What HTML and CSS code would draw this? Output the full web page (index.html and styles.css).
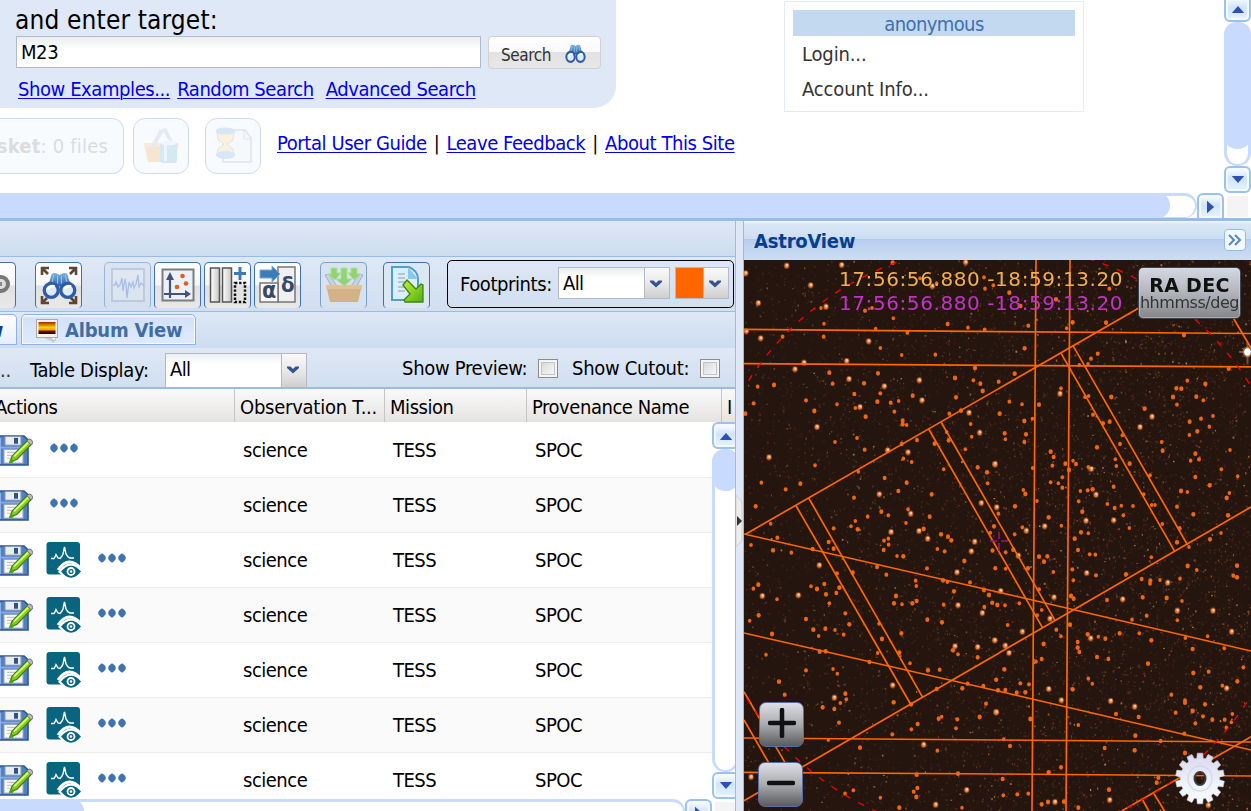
FILE: index.html
```html
<!DOCTYPE html>
<html lang="en">
<head>
<meta charset="utf-8">
<title>Portal</title>
<link rel="stylesheet" href="styles.css">
</head>
<body>
<svg class="defs" aria-hidden="true">
  <defs>
    <linearGradient id="gBlue" x1="0" y1="0" x2="0" y2="1"><stop offset="0" stop-color="#78b4e2"/><stop offset="1" stop-color="#244f9b"/></linearGradient>
    <linearGradient id="gGear" x1="0" y1="0" x2="0" y2="1"><stop offset="0" stop-color="#d9d6ee"/><stop offset="0.6" stop-color="#eef3fa"/><stop offset="1" stop-color="#f8fafc"/></linearGradient>
    <linearGradient id="gSun" x1="0" y1="0" x2="0" y2="1"><stop offset="0" stop-color="#a82400"/><stop offset="0.45" stop-color="#ffd000"/><stop offset="0.66" stop-color="#ff9a00"/><stop offset="0.76" stop-color="#5a1200"/><stop offset="1" stop-color="#210900"/></linearGradient>
    <linearGradient id="gGreen" x1="0" y1="0" x2="1" y2="1"><stop offset="0" stop-color="#c4f23c"/><stop offset="1" stop-color="#4fae12"/></linearGradient>
    <linearGradient id="gGrey" x1="0" y1="0" x2="1" y2="0"><stop offset="0" stop-color="#fff"/><stop offset="1" stop-color="#c5c5c5"/></linearGradient>
    <symbol id="binoc" viewBox="0 0 36 28" preserveAspectRatio="none">
      <path d="M10 2Q13 0 16 2L18 3 20 2Q23 0 26 2L28 9 35 18 27 15H9L1 18 8 9Z" fill="url(#gBlue)"/>
      <path d="M12 3l-2 9M16 4v8M20 4v8M24 3l2 9" stroke="#8fc3ea" stroke-width="1.200"/>
      <circle cx="9.500" cy="19" r="7.200" fill="#dcebf8" stroke="#2f5ca6" stroke-width="3.400"/>
      <circle cx="26.500" cy="19" r="7.200" fill="#dcebf8" stroke="#2f5ca6" stroke-width="3.400"/>
      <path d="M6 18q3-5 7-3M23 18q3-5 7-3" stroke="#fff" stroke-width="2.500" fill="none"/>
    </symbol>
    <symbol id="save" viewBox="0 0 34 32" preserveAspectRatio="none">
      <path d="M0 1H25L29 5V31H0Z" fill="#5280c8" stroke="#30578f" stroke-width="1.600"/>
      <path d="M1 3V30" stroke="#8eb2e8" stroke-width="2"/>
      <rect x="6" y="1.500" width="16" height="9" fill="#e8edf2" stroke="#8795a8"/>
      <rect x="15" y="3" width="4" height="6" fill="#2f527f"/>
      <path d="M2 13h26" stroke="#87ace4" stroke-width="2"/>
      <rect x="5" y="15" width="19" height="14" fill="#fafafa" stroke="#9aa7b6"/>
      <path d="M8 18h13M8 21h11M8 24h8" stroke="#bfc5cc" stroke-width="1.200"/>
      <path d="M11 28l2-6L29 5l4 4-15 16z" fill="#86ca20" stroke="#417a0d" stroke-width="1.200"/>
      <path d="M15 22L30 7" stroke="#d5f871" stroke-width="2"/>
      <path d="M28 6l2-2q3 0 4 4l-2 2z" fill="#c0b9b5" stroke="#736f70"/>
      <circle cx="12.500" cy="27" r="2" fill="#44a80d"/>
    </symbol>
    <symbol id="curve" viewBox="0 0 36 38">
      <rect x="0.500" y="0" width="33.500" height="32.500" rx="3" fill="#08657f"/>
      <path d="M12 30Q24 13 37 30Q25 42 12 30" fill="#fff"/>
      <path d="M5 16.500H8L9 15 10 12.500 12 16 14 16.500 16 14 17 12 18.500 5 20 12 22 15 24 16H28" fill="none" stroke="#fff" stroke-width="1.400"/>
      <path d="M12 28Q23 12 36 28" fill="none" stroke="#fff" stroke-width="3"/>
      <path d="M15 29.500Q25 18 35 29.500Q25 42 15 29.500Z" fill="#08657f"/>
      <circle cx="25" cy="29.500" r="4.400" fill="#fff"/><circle cx="25" cy="29.500" r="2.600" fill="#08657f"/><circle cx="25" cy="29.500" r="1.300" fill="#fff"/>
    </symbol>
    <symbol id="dots" viewBox="0 0 28 10">
      <path id="dot" d="M4 .3Q7.800 2.600 7.800 5 7.800 7.400 4 9.700 .2 7.400 .2 5 .2 2.600 4 .3Z" fill="#3e73ad"/>
      <use href="#dot" x="10"/><use href="#dot" x="20"/>
    </symbol>
    <symbol id="chev" viewBox="0 0 14 9"><path d="M1 1.500H4.500L7 4 9.500 1.500H13V3L7 8.500 1 3Z" fill="#35548f"/></symbol>
  </defs>
</svg>

<main class="page">
  <section class="top">
    <div class="top-view">
      <div class="top-left">
        <div class="search-panel">
          <h1 class="search-title">and enter target:</h1>
          <div class="search-line">
            <div class="target-input">M23</div>
            <div class="search-button"><span>Search</span><svg width="21" height="19"><use href="#binoc"/></svg></div>
          </div>
          <div class="search-links"><a href="#" class="l-ex">Show Examples...</a><a href="#" class="l-rnd">Random Search</a><a href="#" class="l-adv">Advanced Search</a></div>
        </div>
        <div class="basket-line">
          <div class="basket-box"><b>sket</b>: 0 files</div>
          <div class="pale-box">
            <svg width="40" height="40" viewBox="0 0 40 40">
              <path d="M3 17H38L34 36H7Z" fill="#ef9c36"/><path d="M3 17h35v4H3z" fill="#ffb65c"/>
              <path d="M9 21L19 3l4 2L13 22zM31 20L21 3l4-1 9 17z" fill="#9fb2cf"/>
              <rect x="19" y="16" width="17" height="21" rx="3" fill="#67a7d8"/><rect x="23" y="18" width="3" height="17" fill="#c5e2f5"/><ellipse cx="27.500" cy="17" rx="8" ry="2.500" fill="#d8eaf8"/>
            </svg>
          </div>
          <div class="pale-box hourglass">
            <svg width="40" height="40" viewBox="0 0 40 40">
              <path d="M10 4H32L38 12V36H10Z" fill="#f2f4f6" stroke="#8e99a8" stroke-width="1.500"/><path d="M31 4v9h7" fill="none" stroke="#8e99a8"/>
              <path d="M4 6H21L20 14 14 18 20 23 21 29H4L5 23 11 18 5 14Z" fill="#ffd26d" stroke="#7c91b5"/>
              <ellipse cx="12.500" cy="5" rx="10" ry="3.500" fill="#6ba3d8"/><ellipse cx="12.500" cy="29" rx="10" ry="4" fill="#6ba3d8"/>
            </svg>
          </div>
          <nav class="site-links"><a href="#">Portal User Guide</a><span>|</span><a href="#">Leave Feedback</a><span>|</span><a href="#">About This Site</a></nav>
        </div>
      </div>
      <aside class="account">
        <div class="account-name">anonymous</div>
        <div class="account-item login">Login...</div>
        <div class="account-item info">Account Info...</div>
      </aside>
    </div>
    <div class="vbar top-vbar">
      <div class="sbtn"><svg viewBox="0 0 14 9"><path d="M7 1L14 9H0Z"/></svg></div>
      <div class="vtrack"><div class="vthumb"></div></div>
      <div class="sbtn"><svg viewBox="0 0 14 9"><path d="M7 8L14 0H0Z"/></svg></div>
    </div>
    <div class="hbar top-hbar">
      <div class="htrack"><div class="hthumb"></div></div>
      <div class="sbtn side"><svg viewBox="0 0 9 14"><path d="M8 7L0 14V0Z"/></svg></div>
    </div>
    <div class="corner"></div>
  </section>

  <section class="bottom">
    <div class="results">
      <div class="results-head"></div>
      <div class="toolbar">
        <div class="tool t-first"><svg width="44" height="44" viewBox="0 0 44 44"><circle cx="30" cy="21" r="7" fill="#ddd" stroke="#777" stroke-width="4"/><path d="M15 21h16" stroke="#888" stroke-width="4"/></svg></div>
        <div class="tool t-zoom"><svg width="44" height="44" viewBox="0 0 44 44">
          <g fill="none" stroke="#5c4636" stroke-width="2.600"><path d="M5 12V5h7M5 5l6 6M32 5h7v7M39 5l-6 6M5 33v7h7M5 40l5-5M32 40h7v-7M39 40l-6-6"/></g>
          <use href="#binoc" x="5" y="9" width="35" height="27"/></svg></div>
        <div class="tool t-spec dim"><svg width="44" height="44" viewBox="0 0 44 44"><rect x="6" y="6" width="32" height="32" fill="#e4eaf1" stroke="#9aa7b7" stroke-width="2"/><path d="M7 22h2l1-3 2 5 2-2 2-7 1 13 2-12 1 5 1 14 2-16 2 5 2-5 1 6 2-4 2-9 1 12 2-4 3 3" fill="none" stroke="#6687d0" stroke-width="1.300"/></svg></div>
        <div class="tool"><svg width="44" height="44" viewBox="0 0 44 44"><rect x="6.500" y="6.500" width="31" height="31" fill="#eaf1fa" stroke="#7d7d7d" stroke-width="2"/><path d="M14 35V13M8 31H32" stroke="#4a5074" stroke-width="2.200"/><path d="M14 9l4 8h-8zM35 31l-6 4v-8z" fill="#4a5074"/><circle cx="26.500" cy="13" r="2.300" fill="#e95b17"/><circle cx="30" cy="20.500" r="2.300" fill="#e95b17"/><circle cx="21" cy="24" r="2.300" fill="#e95b17"/></svg></div>
        <div class="tool"><svg width="44" height="44" viewBox="0 0 44 44"><rect x="4.500" y="5" width="9" height="34" fill="url(#gGrey)" stroke="#555" stroke-width="1.500"/><rect x="16.500" y="5" width="9" height="34" fill="url(#gGrey)" stroke="#555" stroke-width="1.500"/><rect x="29" y="20" width="10" height="19" fill="none" stroke="#111" stroke-width="2.500" stroke-dasharray="2.400 1.700"/><path d="M34 4v13M28 10.500h12" stroke="#3b7cb8" stroke-width="3"/></svg></div>
        <div class="tool"><svg width="44" height="44" viewBox="0 0 44 44"><rect x="22" y="4" width="17" height="35" fill="#eef0f2" stroke="#777" stroke-width="1.500"/><rect x="4" y="20" width="18" height="19" fill="#fafafa" stroke="#777" stroke-width="1.500"/><path d="M4 7h12V3l8 8-8 8v-4H4z" fill="#3c7cb8" stroke="#76aadb"/><text x="6" y="35" class="greek">α</text><text x="25" y="29" class="greek delta">δ</text></svg></div>
        <div class="tool t-bask dim"><svg width="44" height="44" viewBox="0 0 44 44"><path d="M3 12l4-1 10 15-5 2zM41 12l-4-1-10 15 5 2z" fill="#b8c5d5" stroke="#8595aa"/><path d="M4 22H40L36 39H8Z" fill="#d39343"/><path d="M4 22h36v4H4z" fill="#e9ac5d"/><path d="M9 5h6v5h4l-6 7-7-6h3zM19 5h6v11h5l-8 7-8-7h5zM29 5h6v6h4l-7 6-6-7h3z" fill="#62c81e" stroke="#8bdc5e"/></svg></div>
        <div class="tool t-export"><svg width="44" height="44" viewBox="0 0 44 44"><path d="M7 4H24Q33 8 33 16V37H7Z" fill="#dceefb" stroke="#4d9fd0" stroke-width="2"/><path d="M23 4v12h10z" fill="#8dc7e8"/><path d="M13 11h7M13 15h7M13 19h12M13 24h8M13 28h7" stroke="#a1b9ce" stroke-width="1.500"/><path d="M18 22l4-5 9 9 5-5 2 1V39H20l-1-2 6-6z" fill="url(#gGreen)" stroke="#3d850d" stroke-width="1.300"/></svg></div>
        <div class="footprints">
          <span class="fp-label">Footprints:</span>
          <div class="combo fp-combo"><span>All</span><i><svg><use href="#chev"/></svg></i></div>
          <div class="combo fp-color"><span></span><i><svg><use href="#chev"/></svg></i></div>
        </div>
      </div>
      <div class="tabs">
        <div class="tab active">w</div>
        <div class="tab album"><svg width="24" height="25" viewBox="0 0 24 25"><path d="M3 16L18 24 22 5 20 3Z" fill="#c9cfda"/><path d="M5 14l14 8 2-8z" fill="#f3f5f7" stroke="#aab2c0" stroke-width=".7"/><rect x=".5" y=".5" width="21" height="18" fill="#f7f3e9" stroke="#aaa"/><rect x="2.500" y="3" width="17" height="12" fill="url(#gSun)"/></svg><span>Album View</span></div>
      </div>
      <div class="options">
        <span class="dots-label">..</span><span class="td-label">Table Display:</span>
        <div class="combo td-combo"><span>All</span><i><svg><use href="#chev"/></svg></i></div>
        <span class="prev-label">Show Preview:</span><b class="check"></b>
        <span class="cut-label">Show Cutout:</span><b class="check second"></b>
      </div>
      <div class="grid-head"><span class="c1">Actions</span><span class="c2">Observation T...</span><span class="c3">Mission</span><span class="c4">Provenance Name</span><span class="c5">I</span></div>
      <div class="grid-body">
        <div class="rows">
          <div class="row"><div class="acts"><svg class="i-save"><use href="#save"/></svg><svg class="i-dots"><use href="#dots"/></svg></div><span class="c2">science</span><span class="c3">TESS</span><span class="c4">SPOC</span></div>
          <div class="row"><div class="acts"><svg class="i-save"><use href="#save"/></svg><svg class="i-dots"><use href="#dots"/></svg></div><span class="c2">science</span><span class="c3">TESS</span><span class="c4">SPOC</span></div>
          <div class="row"><div class="acts"><svg class="i-save"><use href="#save"/></svg><svg class="i-curve"><use href="#curve"/></svg><svg class="i-dots"><use href="#dots"/></svg></div><span class="c2">science</span><span class="c3">TESS</span><span class="c4">SPOC</span></div>
          <div class="row"><div class="acts"><svg class="i-save"><use href="#save"/></svg><svg class="i-curve"><use href="#curve"/></svg><svg class="i-dots"><use href="#dots"/></svg></div><span class="c2">science</span><span class="c3">TESS</span><span class="c4">SPOC</span></div>
          <div class="row"><div class="acts"><svg class="i-save"><use href="#save"/></svg><svg class="i-curve"><use href="#curve"/></svg><svg class="i-dots"><use href="#dots"/></svg></div><span class="c2">science</span><span class="c3">TESS</span><span class="c4">SPOC</span></div>
          <div class="row"><div class="acts"><svg class="i-save"><use href="#save"/></svg><svg class="i-curve"><use href="#curve"/></svg><svg class="i-dots"><use href="#dots"/></svg></div><span class="c2">science</span><span class="c3">TESS</span><span class="c4">SPOC</span></div>
          <div class="row"><div class="acts"><svg class="i-save"><use href="#save"/></svg><svg class="i-curve"><use href="#curve"/></svg><svg class="i-dots"><use href="#dots"/></svg></div><span class="c2">science</span><span class="c3">TESS</span><span class="c4">SPOC</span></div>
        </div>
        <div class="vbar grid-vbar">
          <div class="sbtn"><svg viewBox="0 0 14 9"><path d="M7 1L14 9H0Z"/></svg></div>
          <div class="vtrack"><div class="vthumb"></div></div>
          <div class="sbtn"><svg viewBox="0 0 14 9"><path d="M7 8L14 0H0Z"/></svg></div>
        </div>
      </div>
      <div class="hbar grid-hbar">
        <div class="htrack"><div class="hthumb"></div></div>
        <div class="sbtn side"><svg viewBox="0 0 9 14"><path d="M8 7L0 14V0Z"/></svg></div>
        <div class="grid-corner"></div>
      </div>
    </div>
    <div class="splitter"><svg width="8" height="54" viewBox="0 0 8 54"><path d="M0 1L6 8V46L0 53Z" fill="#ededed" stroke="#cfcfcf"/><path d="M1 22l5 5-5 5z" fill="#333"/></svg></div>
    <div class="astro">
      <div class="astro-head"><span>AstroView</span><div class="collapse"><svg width="14" height="12" viewBox="0 0 14 12"><path d="M1 1l5 5-5 5M7 1l5 5-5 5" fill="none" stroke="#5a86bd" stroke-width="2"/></svg></div></div>
      <div class="sky">
        <canvas id="stars" width="507" height="551"></canvas>
        <svg class="overlay" viewBox="744 260 507 551" width="507" height="551">
          <g fill="none" stroke="#f60" stroke-width="1.700">
            <path d="M744 329.300L1000 331.700 1251 333.500M744 363.700L1000 365.300 1251 366.800M744 738L1000 740 1251 742M744 772.300L1000 774 1251 776"/>
            <path d="M1036 260Q1034.500 540 1032 811M1070 260Q1068.500 540 1066 811"/>
            <path d="M745 534.500L1205 270 1251 348M744 534L1000 592.500 1251 651M744 633L1000 691.500 1251 750"/>
            <path d="M744 800.700L910 704.500 1043 627.500 1251 507"/>
            <path d="M796 505.700L910.700 704.300M808.700 498L922.700 697.300M928.700 429L1042.300 627.300M941 422L1055 620.300M1060.700 352.700L1174.700 551.300M1073 345.700L1187 544"/>
            <path d="M744 691.700L791 773M744 720L779 780.600M1121.700 811L1251 736.700M1142.700 800l6 11M1154 793.700l11 18"/>
          </g>
          <circle cx="998" cy="541" r="296.500" fill="none" stroke="#f00" stroke-width="1.300" stroke-dasharray="6.500 9"/>
          <path d="M990 541h7M1001 541h7M999 532v7M999 543v8" stroke="#a0107c" stroke-width="1.600"/>
          <g id="gear" transform="translate(1200 778.500)"></g>
        </svg>
        <div class="coords">17:56:56.880 -18:59:13.20</div>
        <div class="coords cursor">17:56:56.880 -18:59:13.20</div>
        <div class="radec"><b>RA DEC</b><span>hhmmss/deg</span></div>
        <div class="zoom in"><svg width="28" height="30" viewBox="0 0 28 30"><path d="M14 2V28M2 15H26" stroke="#111" stroke-width="4.500" stroke-linecap="round"/></svg></div>
        <div class="zoom out"><svg width="28" height="30" viewBox="0 0 28 30"><path d="M2 15H26" stroke="#111" stroke-width="4.500" stroke-linecap="round"/></svg></div>
      </div>
    </div>
  </section>
</main>
<script src="sky.js"></script>
</body>
</html>
```

FILE: styles.css
```css
* { box-sizing: border-box; }
body { margin: 0; background: #fff; color: #000; font: 20px/24px "DejaVu Sans Condensed", "DejaVu Sans", sans-serif; font-stretch: condensed; letter-spacing: -0.42px; }
a { color: #0000ee; text-decoration: underline; text-decoration-thickness: 1px; text-underline-offset: 2px; }
svg { display: block; flex: none; }
.defs { position: absolute; width: 0; height: 0; }
.page { width: 1251px; height: 811px; overflow: hidden; display: flex; flex-direction: column; white-space: nowrap; }

/* search area */
.top { height: 221px; display: grid; grid-template-columns: 1224px 27px; grid-template-rows: 193px 25px; border-bottom: 3px solid #99bbe8; }
.top-view { display: flex; overflow: hidden; }
.top-left { width: 784px; }
.search-panel { width: 616px; height: 108px; background: #dfe8f6; border-radius: 0 0 22px 0; padding: 5px 0 0 15px; }
.search-title { margin: 0; font-size: 26px; line-height: 31px; height: 31px; font-weight: 400; letter-spacing: 0.15px; }
.search-line { display: flex; gap: 7px; height: 33px; padding-left: 1px; }
.target-input { width: 465px; height: 32px; border: 1px solid #b5b8c8; background: linear-gradient(#e9eeee, #fff 12px); padding: 3px 4px; }
.search-button { width: 113px; height: 33px; border: 1px solid #d1d1d1; border-radius: 4px; background: linear-gradient(#fff, #f9f9f9 48%, #e2e2e2 50%, #e7e7e7); display: flex; align-items: center; padding: 5px 0 0 12px; font-size: 17px; color: #333; letter-spacing: -0.4px; }
.search-button span { width: 64px; }
.search-button svg { margin-bottom: 4px; }
.search-links { display: flex; padding: 8px 0 0 3px; }
.l-ex { margin-right: 7px; }
.l-rnd { margin-right: 12px; }
.basket-line { display: flex; padding-top: 10px; }
.basket-box { width: 124px; height: 56px; border: 1px solid #d0dcec; border-left: 0; border-radius: 0 12px 12px 0; background: #f8fbfe; color: #dcdcde; padding: 15px 15px 0 0; direction: ltr; display: flex; justify-content: flex-end; white-space: pre; letter-spacing: 0.2px; margin-right: 9px; overflow: hidden; }
.pale-box { width: 56px; height: 56px; border: 1px solid #d0dcec; border-radius: 12px; background: #f8fbfe; padding: 7px; margin-right: 16px; }
.pale-box svg { opacity: .22; }
.site-links { display: flex; gap: 7px; padding-top: 13px; }
.account { width: 300px; height: 111px; margin-top: 1px; border: 1px solid #e4ebf5; padding: 8px; }
.account-name { height: 26px; line-height: 28px; background: #c3d9f0; color: #4170ad; text-align: center; letter-spacing: -0.6px; }
.account-item { color: #333; padding-left: 9px; height: 35px; line-height: 37px; letter-spacing: -0.15px; }

/* scrollbars */
.vbar, .hbar { display: flex; background: #fff; }
.vbar { flex-direction: column; }
.vtrack { flex: 1; border: 3px solid #c9daff; border-width: 0 3px 2px; border-radius: 13px; }
.vthumb { background: #c9daff; border-radius: 13px; margin: 0 -3px; }
.sbtn { width: 27px; height: 27px; flex: none; border: 2px solid #9dc1ee; border-radius: 6px; background: linear-gradient(#fff, #cfe4fb 45%, #e7f4ff); display: flex; align-items: center; justify-content: center; box-shadow: inset 0 0 0 2px #f3fafe; }
.sbtn svg { width: 14px; height: 8px; fill: #2e50b0; }
.sbtn.side { height: 25px; border-bottom: 0; border-radius: 6px 6px 0 0; }
.sbtn.side svg { width: 8px; height: 14px; }
.htrack { flex: 1; border-top: 3px solid #c9daff; border-right: 2px solid #c9daff; border-bottom: 1px solid #c9daff; border-radius: 0 14px 14px 0; }
.hthumb { height: 25px; margin-top: -3px; background: #c9daff; border-radius: 0 12px 12px 0; }
.top-vbar .sbtn:first-child { margin-top: -5px; }
.top-vbar .vthumb { height: 127px; }
.top-hbar .hthumb { width: 1170px; }
.corner { background: #f4f4f4; margin: 3px 3px 1px; }

/* results */
.bottom { height: 590px; display: flex; }
.results { width: 736px; border-right: 1px solid #99bbe8; overflow: hidden; }
.results-head { height: 36px; background: linear-gradient(#dfe8f5, #cddcf0); border-bottom: 1px solid #99bbe8; }
.toolbar { height: 55px; display: flex; padding-top: 3px; background: linear-gradient(#dfe8f5, #d1dff0); border-bottom: 1px solid #99bbe8; gap: 3px; }
.tool { width: 47px; height: 46px; margin-top: 2px; border: 1px solid #4170ad; border-bottom: 0; border-radius: 5px 5px 4px 4px; background: linear-gradient(#fff, #f6f6f6 48%, #e1e1e1 52%, #e8e8e8); padding: 0 .5px; overflow: hidden; flex: none; }
.tool.dim { opacity: .6; background: #d6e2f1; }
.t-first { margin-left: -31px; }
.t-zoom { margin-left: 16px; }
.t-spec { margin-left: 19px; }
.t-spec.dim { opacity: .4; }
.t-bask { margin-left: 16px; }
.t-export { margin-left: 13px; background: #dce7f4; }
.greek { font: bold 23px "DejaVu Sans Condensed", sans-serif; fill: #384968; }
.delta { font-size: 22px; }
.footprints { width: 287px; height: 48px; margin-left: 14px; border: 1px solid #000; border-radius: 5px; display: flex; align-items: flex-start; padding: 6px 0 0 12px; }
.fp-label { width: 98px; line-height: 34px; }
.combo { height: 32px; display: flex; border: 1px solid #b5b8c8; background: linear-gradient(#e9eeee, #fff 10px); }
.combo span { flex: 1; padding: 4px 4px; line-height: 23px; letter-spacing: -0.6px; }
.combo i { width: 25px; border-left: 1px solid #b5b8c8; background: linear-gradient(#fafafa, #e9e9e9 50%, #cfcfcf); padding: 11px 0 0 4px; }
.combo i svg { width: 14px; height: 9px; }
.fp-combo { width: 112px; margin-right: 5px; }
.fp-color { width: 54px; background: #f60; }
.tabs { height: 36px; display: flex; padding-top: 2px; background: linear-gradient(#dfe8f5, #cddcf0); gap: 4px; font-weight: 700; }
.tab { border: 1px solid #8db2e3; border-radius: 5px 5px 0 0; background: linear-gradient(#fff, #d3e2f8 3px, #deebff); height: 31px; box-shadow: inset 0 0 0 1px #f4f9ff; }
.tab.active { width: 17px; border-left: 0; border-radius: 0 5px 0 0; color: #15428b; direction: rtl; overflow: hidden; padding: 3px 13px 0 0; box-shadow: none; background: linear-gradient(#fff, #e5efff); }
.tab.album { width: 175px; color: #416da3; display: flex; padding: 4px 0 0 14px; letter-spacing: -0.2px; }
.album span { margin-left: 5px; line-height: 23px; }
.options { height: 39px; display: flex; background: linear-gradient(#dfe8f5, #d1dff0); padding-top: 5px; overflow: hidden; line-height: 34px; letter-spacing: -0.3px; }
.dots-label { width: 30px; color: #333; }
.td-label { width: 135px; }
.td-combo { width: 142px; height: 35px; }
.prev-label { margin-left: 95px; width: 136px; line-height: 30px; }
.cut-label { margin-left: 14px; width: 128px; line-height: 30px; }
.check { width: 20px; height: 19px; margin-top: 6px; border: 1px solid #8c8c8c; background: linear-gradient(135deg, #d0d2d6, #fff); box-shadow: inset 0 0 0 2px #f5f5f5, inset 0 0 0 3px #c2c4c8; }
.grid-head { height: 35px; border-top: 2px solid #99bbe8; display: flex; background: linear-gradient(#fafafa, #e5e3e2); line-height: 36px; letter-spacing: -0.45px; }
.grid-head span { border-right: 1px solid #c5c5c5; height: 33px; flex: none; padding-left: 5px; }
.grid-head .c1 { width: 235px; padding: 0; text-indent: -5px; }
.grid-head .c2 { letter-spacing: -0.25px; }
.c2 { width: 150px; } .c3 { width: 142px; } .c4 { width: 195px; } .grid-head .c5 { border: 0; }
.grid-body { height: 377px; display: flex; }
.rows { width: 712px; overflow: hidden; flex: none; padding-top: 1px; }
.row { height: 55px; display: flex; align-items: center; border-bottom: 1px solid #ededed; line-height: 54px; letter-spacing: -0.5px; }
.row:nth-child(even) { background: #fafafa; }
.row span { padding-left: 8px; flex: none; }
.acts { width: 235px; height: 55px; display: flex; flex: none; }
.i-save { width: 34px; height: 31px; margin: 12px 0 0 -1px; }
.i-curve { width: 36px; height: 38px; margin: 9px 0 0 13px; }
.i-dots { width: 28px; height: 10px; margin: 20px 0 0 17px; }
.i-curve + .i-dots { margin-left: 16px; }
.grid-vbar { width: 27px; flex: none; }
.grid-vbar .vthumb { height: 42px; }
.grid-hbar { height: 25px; width: 736px; }
.grid-hbar .hthumb { width: 84px; }
.grid-corner { width: 21px; margin: 3px 0 0 3px; background: #f4f4f4; }

/* sky view */
.splitter { width: 7px; background: #dfe8f6; padding-top: 273px; overflow: hidden; }
.astro { width: 508px; border-left: 1px solid #99bbe8; }
.astro-head { height: 39px; display: flex; justify-content: space-between; background: linear-gradient(#f3f8fd, #dae7f6 3px, #cddef3 46%, #abc7ec 46%, #b8cfee 50%, #cddef3); padding: 8px 5px 0 10px; color: #04408c; font-weight: 700; letter-spacing: -0.2px; }
.collapse { width: 22px; height: 22px; border: 1px solid #95bbe7; border-radius: 4px; background: #f1f8fe; padding: 4px 3px; }
.sky { position: relative; height: 551px; background: #25150f; overflow: hidden; }
.sky canvas, .overlay { position: absolute; left: 0; top: 0; }
.coords { position: absolute; left: 95px; top: 7px; font: 20px/24px "DejaVu Sans", sans-serif; font-stretch: normal; letter-spacing: .58px; color: #f0b050; }
.coords.cursor { top: 31px; color: #c233c6; }
.radec { position: absolute; left: 394px; top: 7px; width: 103px; height: 52px; border: 1px solid #3b4350; border-radius: 5px; background: linear-gradient(#d4d8e2, #b5b8bf 45%, #858688); text-align: center; font: 16px/18px "DejaVu Sans", sans-serif; font-stretch: normal; color: #333; letter-spacing: -.45px; box-shadow: inset 0 0 0 1px #dce0ea66; }
.radec b { display: block; margin-top: 9px; font-size: 19px; line-height: 17px; color: #111; letter-spacing: .3px; }
.radec span { display: block; margin: 0 -2px; }
.zoom { position: absolute; left: 15px; width: 45px; height: 45px; border: 1px solid #5a6ca8; border-radius: 7px; background: linear-gradient(#dddfe5, #aaabae 50%, #5a5b5e); padding: 5px 8px; }
.zoom.in { top: 442px; }
.zoom.out { top: 502px; left: 14px; }
```

FILE: sky.js
```js
// Deterministic star field: a faint random background plus catalogued sources.
const ctx = document.getElementById('stars').getContext('2d');
let seed = 4711;
const rnd = () => (seed = (seed * 16807) % 2147483647) / 2147483647;
ctx.fillStyle = '#25150f';
ctx.fillRect(0, 0, 507, 551);
for (let i = 0; i < 11000; i++) {
  const x = rnd() * 507, y = rnd() * 551;
  const dense = 0.35 + 0.65 * Math.min(1, x / 380);
  if (rnd() > dense) continue;
  const b = rnd() * rnd() * rnd();
  ctx.fillStyle = `rgba(${160 + b * 80}, ${80 + b * 90}, ${38 + b * 80}, ${0.15 + b * 0.8})`;
  ctx.fillRect(x, y, 1 + rnd() * 0.9, 1 + rnd() * 1.2);
}
// Catalogue entries are [x, y] in thirds of a pixel from the tile origin.
const tiles = [
  [740, 220, [[458,128],[732,172],[590,190],[540,175],[760,196],[735,206],[243,264],[252,311],[251,350],[375,272],[396,264],[460,295],[407,326],[623,312],[684,323],[734,329],[502,338],[421,384],[485,405],[586,404],[268,458],[278,491],[414,460],[372,490],[343,522],[198,541],[223,573],[291,553],[346,564],[421,520],[412,545],[452,548],[476,543],[463,575],[377,590],[518,527],[645,474],[705,444],[700,481],[721,491],[728,513],[648,532],[628,581],[663,572],[692,612],[695,650],[676,688],[626,661],[620,636],[584,671],[531,660],[488,602],[488,613],[500,615],[285,666],[351,654],[374,689],[485,672],[225,736],[355,755],[434,774],[490,716],[515,726],[611,748],[713,742],[741,757],[743,790],[64,788],[137,808],[181,791],[342,833],[475,813],[500,788],[575,823],[47,859],[102,495],[53,500],[41,550],[16,581],[128,350],[504,868]]],
  [990, 220, [[58,218],[198,238],[92,258],[358,206],[248,307],[230,325],[115,317],[348,308],[104,385],[323,401],[303,416],[294,432],[268,435],[74,461],[26,485],[58,545],[96,553],[147,554],[29,581],[103,603],[127,596],[44,640],[108,643],[46,658],[103,666],[182,695],[191,711],[187,737],[226,731],[249,722],[258,732],[237,750],[128,744],[217,772],[182,787],[205,790],[217,803],[100,810],[106,822],[141,843],[75,859],[213,505],[285,531],[296,528],[364,531],[309,584],[339,610],[359,605],[397,646],[390,672],[321,682],[376,718],[379,738],[419,731],[295,741],[371,800],[308,808],[293,811],[271,813],[266,844],[352,852],[394,857],[429,858],[374,864],[464,566],[515,666],[518,692],[549,531],[574,506],[559,505],[592,482],[619,530],[640,541],[646,492],[561,554],[633,596],[599,605],[669,588],[658,620],[622,634],[598,645],[720,690],[616,701],[602,722],[627,718],[694,748],[616,771],[743,769],[659,796],[573,813],[592,816],[718,819],[710,834],[561,860],[480,766],[461,823],[485,855],[495,855],[582,345],[716,446]]],
  [740, 510, [[92,41],[33,105],[99,121],[154,128],[112,83],[383,20],[346,33],[333,49],[353,58],[281,55],[266,96],[281,116],[218,117],[291,190],[338,188],[411,171],[439,194],[432,92],[446,104],[431,120],[445,86],[471,138],[490,139],[445,16],[424,5],[569,20],[551,57],[498,39],[603,73],[624,80],[634,91],[592,117],[614,124],[561,175],[527,212],[529,228],[609,211],[622,216],[690,217],[732,240],[747,255],[757,278],[733,291],[673,153],[757,122],[766,174],[751,68],[642,244],[611,284],[530,273],[517,280],[486,283],[462,280],[468,258],[253,222],[213,229],[231,237],[258,253],[289,249],[298,233],[268,280],[40,236],[55,224],[111,268],[56,316],[29,332],[198,327],[316,310],[328,343],[220,359],[256,356],[285,360],[236,378],[311,374],[96,372],[78,434],[239,425],[257,424],[388,456],[413,429],[417,341],[426,387],[484,370],[478,428],[562,329],[606,337],[639,421],[654,433],[713,442],[766,391],[198,481],[279,477],[292,491],[117,515],[134,554],[510,460],[564,481],[599,479],[667,535],[683,521],[730,528],[590,537],[769,509],[461,577],[316,551],[319,568],[301,579],[283,597],[297,638],[248,592],[514,658],[533,642],[596,626],[605,620],[652,628],[648,655],[738,581],[719,621],[513,583],[457,673],[360,713],[592,722],[265,690],[530,794],[654,791],[340,841],[315,851],[421,863],[529,861],[521,845],[532,834],[478,893],[666,893]]],
  [990, 510, [[12,49],[25,11],[277,5],[400,16],[418,54],[176,22],[214,47],[97,52],[74,73],[254,86],[295,70],[273,67],[264,120],[299,133],[316,134],[8,121],[70,119],[47,127],[147,140],[162,155],[172,139],[47,176],[16,175],[114,175],[190,186],[247,178],[250,211],[318,196],[408,193],[351,270],[243,258],[251,266],[6,278],[22,285],[45,286],[88,280],[147,238],[53,345],[155,300],[142,316],[199,359],[213,379],[161,402],[240,344],[263,396],[263,413],[268,426],[293,373],[325,380],[346,386],[389,370],[426,329],[448,370],[470,317],[484,391],[455,207],[481,212],[510,210],[480,221],[458,262],[570,206],[530,264],[576,273],[562,331],[620,180],[593,168],[597,111],[660,88],[693,69],[741,167],[730,197],[741,202],[714,16],[610,13],[517,42],[561,97],[569,55],[484,142],[586,384],[653,379],[703,415],[608,417],[321,441],[355,447],[138,455],[155,447],[43,478],[18,509],[91,520],[117,523],[46,540],[24,541],[80,548],[106,547],[295,506],[307,521],[248,538],[474,461],[544,554],[585,571],[585,578],[610,489],[656,485],[631,532],[697,527],[742,514],[760,472],[608,603],[645,583],[557,608],[616,640],[639,619],[667,629],[727,612],[724,637],[709,653],[704,629],[378,612],[446,621],[265,645],[121,627],[436,677],[434,721],[344,714],[41,688],[60,708],[583,671],[585,729],[512,693],[213,772],[176,787],[38,807],[40,856],[82,853],[115,851],[174,876],[155,883],[265,893],[357,839],[500,818],[505,803],[222,875]]]
];
const bright = [[140,137],[17,160],[212,196],[55,249],[62,355],[19,334],[165,448],[327,477],[433,499],[538,481],[546,541],[360,561],[192,428],[320,423],[386,364],[258,260],[577,199],[677,127],[231,621],[87,712],[418,823],[443,691],[504,697],[687,578],[719,638],[765,733],[724,849],[305,135]];
const bright2 = [[210,521],[450,621],[486,590],[304,747],[318,824],[15,732],[20,862]];
const bright3 = [[512,11],[537,63],[563,86],[704,95],[694,124],[453,66],[238,166],[67,258],[175,256],[651,187],[654,286],[727,309],[645,409],[713,411],[458,526],[283,563],[551,704],[768,606],[587,884],[680,840],[33,801]];
const bright4 = [[109,62],[164,49],[288,32],[371,31],[290,189],[85,137],[32,243],[192,262],[180,326],[97,365],[14,391],[46,407],[57,429],[302,385],[398,268],[562,302],[669,302],[533,218],[725,365],[710,535],[434,590],[362,573],[214,571],[176,537],[19,607],[359,870],[195,876],[655,886]];
function dot(x, y, r, fill) {
  ctx.beginPath(); ctx.ellipse(x, y, r, r * 1.12, 0, 0, Math.PI * 2);
  ctx.fillStyle = fill; ctx.fill();
}
for (const [ox, oy, list] of tiles)
  for (const [x, y] of list) dot(ox - 744 + x / 3, oy - 260 + y / 3, 1.75 + (x * 7 + y) % 5 * 0.1, '#ee6712');
[[740, 220, bright], [990, 220, bright2], [740, 510, bright3], [990, 510, bright4]].forEach(([ox, oy, list]) => {
  for (const [x, y] of list) {
    const px = ox - 744 + x / 3, py = oy - 260 + y / 3;
    dot(px, py, 3, 'rgba(190,110,60,.4)'); dot(px, py, 2.2, '#ee7a30'); dot(px + .4, py - .6, 1.2, '#e8cbb2');
  }
});
// Bright star at the right edge with diffraction spikes.
ctx.fillStyle = 'rgba(220,150,90,.45)';
ctx.fillRect(502.500, 82, 2, 22); ctx.fillRect(495, 91, 12, 2);
dot(503.500, 92, 5, 'rgba(225,165,110,.5)'); dot(503.500, 92, 3.300, '#fff');

// Settings gear: fourteen teeth around a ring.
const teeth = 14, pts = [];
for (let i = 0; i < teeth; i++)
  for (const [f, r] of [[-.36, 20.500], [-.25, 25.500], [.25, 25.500], [.36, 20.500]]) {
    const a = (i + f) / teeth * Math.PI * 2;
    pts.push(`${(Math.sin(a) * r * .96).toFixed(2)} ${(-Math.cos(a) * r).toFixed(2)}`);
  }
document.getElementById('gear').innerHTML =
  `<path fill-rule="evenodd" fill="url(#gGear)" stroke="#c8ccd8" stroke-width=".6" d="M${pts.join('L')}ZM-5.500 0a5.500 6.500 0 1 0 11 0a5.500 6.500 0 1 0 -11 0Z"/>` +
  '<ellipse rx="12" ry="12.500" fill="none" stroke="#d3d8e4" stroke-width="1.300"/><ellipse rx="5.500" ry="6.500" fill="none" stroke="#3a3a40" stroke-width="2"/>';
```
